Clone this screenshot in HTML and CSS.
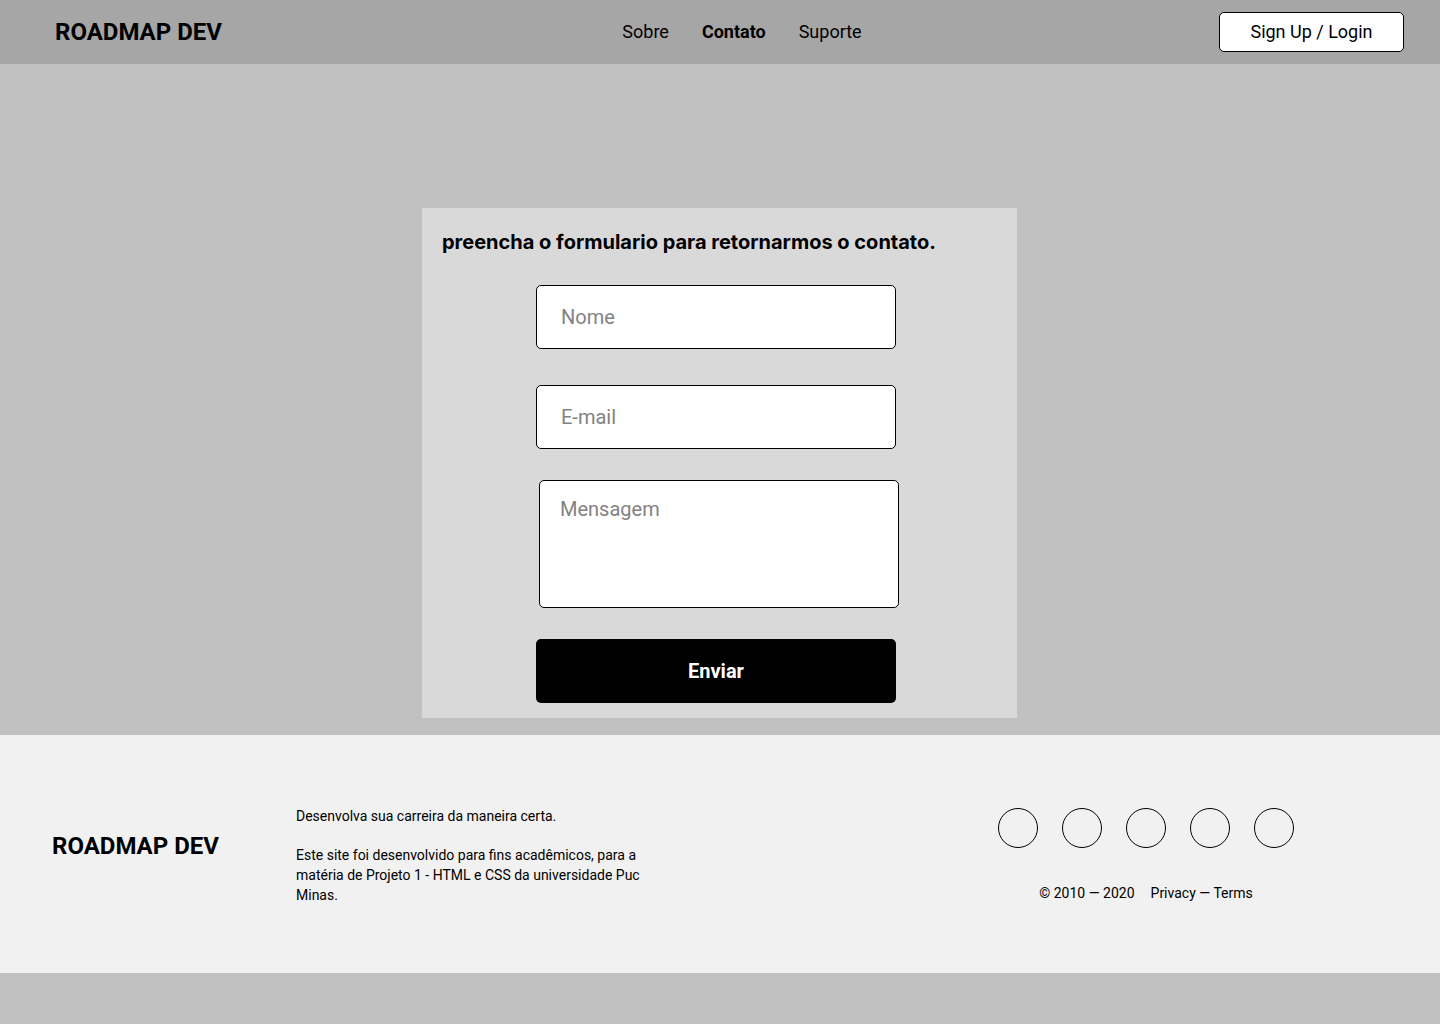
FILE: index.html
```html
<!DOCTYPE html>
<html lang="pt-BR">
<head>
  <meta charset="utf-8">
  <meta name="viewport" content="width=device-width, initial-scale=1">
  <title>Contato</title>
  <link rel="stylesheet" href="styles.css">
</head>
<body>
  <header class="header">
    <a class="brand" href="#">ROADMAP DEV</a>
    <nav class="nav">
      <a class="nav-link" href="#">Sobre</a>
      <a class="nav-link nav-link-active" href="#" aria-current="page">Contato</a>
      <a class="nav-link" href="#">Suporte</a>
    </nav>
    <button class="login" type="button">Sign Up / Login</button>
  </header>

  <main class="main">
    <form class="card">
      <h1 class="card-title">preencha o formulario para retornarmos o contato.</h1>
      <div class="fields">
        <input class="field" type="text" placeholder="Nome" aria-label="Nome">
        <input class="field field-email" type="email" placeholder="E-mail" aria-label="E-mail">
        <textarea class="field field-message" placeholder="Mensagem" aria-label="Mensagem"></textarea>
        <button class="submit" type="submit">Enviar</button>
      </div>
    </form>
  </main>

  <footer class="footer">
    <a class="brand footer-brand" href="#">ROADMAP DEV</a>
    <div class="about">
      <p>Desenvolva sua carreira da maneira certa.</p>
      <p>Este site foi desenvolvido para fins acadêmicos, para a matéria de Projeto 1 - HTML e CSS da universidade Puc Minas.</p>
    </div>
    <div class="footer-side">
      <div class="social">
        <a class="social-link" href="#"></a>
        <a class="social-link" href="#"></a>
        <a class="social-link" href="#"></a>
        <a class="social-link" href="#"></a>
        <a class="social-link" href="#"></a>
      </div>
      <div class="legal">
        <span>© 2010 — 2020</span>
        <span><a href="#">Privacy</a> — <a href="#">Terms</a></span>
      </div>
    </div>
  </footer>
</body>
</html>
```
FILE: styles.css
```css
* {
  box-sizing: border-box;
}

body {
  margin: 0;
  min-height: 100vh;
  background: #c1c1c1;
  color: #000;
  font-family: Roboto, "Liberation Sans", sans-serif;
  font-size: 14px;
  line-height: 20px;
}

a {
  color: inherit;
  text-decoration: none;
}

p,
h1 {
  margin: 0;
}

button,
input,
textarea {
  font-family: inherit;
}

.brand {
  font-size: 24px;
  line-height: 28px;
  font-weight: 700;
  white-space: nowrap;
}

/* Header */

.header {
  display: grid;
  grid-template-columns: 1fr auto 1fr;
  align-items: center;
  min-height: 64px;
  padding: 0 36px 0 55px;
  background: #a6a6a6;
}

.nav {
  display: flex;
  gap: 33px;
  padding-left: 25px;
  font-size: 18px;
  line-height: 24px;
}

.nav-link-active {
  font-weight: 700;
}

.login {
  justify-self: end;
  min-width: 185px;
  height: 40px;
  padding: 0 30px;
  border: 1px solid #000;
  border-radius: 5px;
  background: #fff;
  color: #000;
  font-size: 18px;
  line-height: 24px;
}

/* Contact form */

.main {
  display: flex;
  justify-content: center;
  padding: 144px 1px 17px 0;
}

.card {
  width: 100%;
  max-width: 595px;
  padding: 22px 20px 15px;
  background: #d9d9d9;
}

.card-title {
  font-family: Inter, "Liberation Sans", sans-serif;
  font-size: 20px;
  line-height: 24px;
  font-weight: 700;
}

.fields {
  display: flex;
  flex-direction: column;
  align-items: flex-start;
  padding: 31px 0 0 94px;
}

.field {
  width: 360px;
  max-width: 100%;
  height: 64px;
  margin: 0 0 36px;
  padding: 0 24px;
  border: 1px solid #000;
  border-radius: 5px;
  background: #fff;
  font-size: 20px;
  line-height: 24px;
}

.field::placeholder {
  color: #828282;
  opacity: 1;
}

.field-email {
  margin-bottom: 31px;
}

.field-message {
  height: 128px;
  margin: 0 0 31px 3px;
  padding: 16px 20px;
  resize: none;
}

.submit {
  width: 360px;
  max-width: 100%;
  height: 64px;
  border: 0;
  border-radius: 5px;
  background: #000;
  color: #fff;
  font-size: 20px;
  line-height: 24px;
  font-weight: 700;
}

/* Footer */

.footer {
  display: flex;
  align-items: flex-start;
  padding: 71px 146px 68px 52px;
  background: #f1f1f1;
}

.footer-brand {
  flex: 0 0 244px;
  padding-top: 26px;
}

.about {
  display: flex;
  flex-direction: column;
  gap: 19px;
  max-width: 352px;
}

.footer-side {
  display: flex;
  flex-direction: column;
  align-items: center;
  gap: 35px;
  margin-left: auto;
  padding-top: 2px;
}

.social {
  display: flex;
  gap: 24px;
}

.social-link {
  width: 40px;
  height: 40px;
  border: 1px solid #000;
  border-radius: 50%;
}

.legal {
  display: flex;
  gap: 16px;
}
```
